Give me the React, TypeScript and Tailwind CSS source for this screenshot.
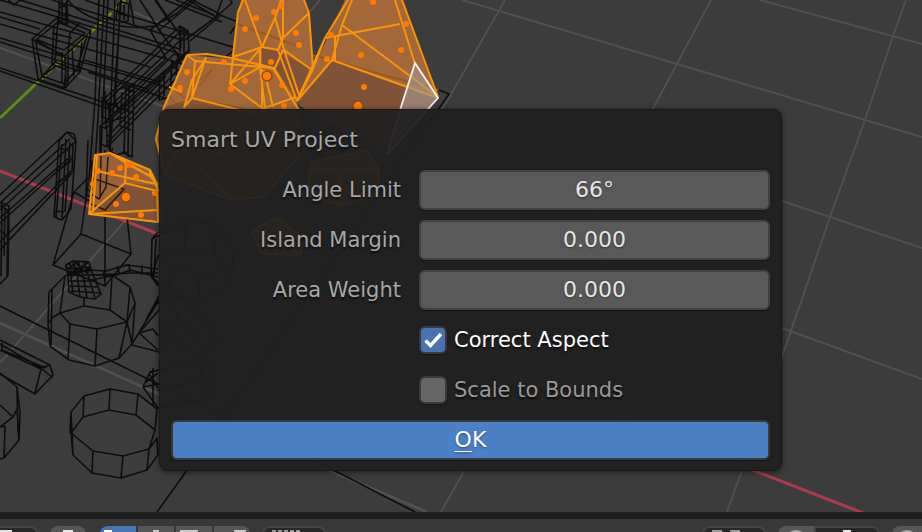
import { useState } from "react";
import type { ReactNode } from "react";

const GRID = [
  "M760 0L922 44",
  "M462 0L560 29L677 64L865 120L922 137",
  "M600 140L782 201L830 217L922 248",
  "M600 262L782 328L922 379",
  "M711 0L654 107L463 473L441 512",
  "M906 0L893 36L865 120L830 217L791 331L741 473L727 512",
  "M505 0L449 98L400 170",
  "M320 0L123 223L0 363",
  "M0 48L165 107",
  "M134 12L180 32",
];

const WIRES = [
  // Ground outline
  "M439 90L449 94L293 318L185 473L157 512 M0 306L158 384L345 476L415 512",
  // Deck planks
  "M0 0L150 44L240 74 M0 12L160 57L250 86 M0 24L150 67 M0 38L160 85L185 94 M0 42L150 90 M0 68L118 107 M0 71L112 110 M0 17L40 29 M20 0L140 37L180 49 M52 0L185 41 M85 0L130 16L236 48 M165 0L222 22 M88 72L165 98 M84 60L160 82",
  "M8 0L14 5L20 0 M155 0L170 22 M176 0L214 15",
  // Posts
  "M99 0L95 100L89 180 M104 0L98 118L94 179 M108 0L101 150L100 181 M115 0L109 150 M121 0L114 100L110 151 M120 5L116 90",
  // Curved rails
  "M68 0Q78 14 105 22Q128 30 154 26L176 14L192 0 M130 0L134 25 M140 0L166 40L180 57 M156 0L180 35 M150 30L167 60",
  "M150 30L188 0 M158 31L196 0 M188 0L216 17L232 3L230 0 M192 0L220 14 M216 17L185 40 M220 16L190 41 M216 17L222 0 M196 83L236 48 M200 86L232 56 M220 15L238 22L230 34",
  // Small box on the axis
  "M122 2L129 4L128 21L122 22L116 20L118 4Z M124 5L124 20 M118 13L128 16 M101 18L116 20",
  // Bucket
  "M32 39L58 17L91 31L65 56Z M36 40L58 22L85 33L64 50Z M32 39L38 79L65 88L80 72L91 31 M36 43L42 76L64 84L77 69L87 36 M58 17L55 62L40 79 M55 62L81 72 M54 25L52 64L66 70L64 87 M65 56L66 88 M62 52L62 83 M68 55L68 86 M72 48L74 76 M82 42L79 70 M40 79L53 64 M44 75L56 66 M34 41L64 56 M64 56L89 33 M80 23L70 33L68 53 M38 40L55 47 M52 33L72 38",
  "M59 0L59 25 M62 0L62 23 M66 2L66 26 M67 0L68 24 M59 4L68 8 M59 14L68 17 M60 8L66 4 M58 20L68 25",
  // Long railing
  "M102 101L180 26L188 31L189 52L110 120L102 117Z M105 103L183 29 M107 109L188 33 M107 120L189 50 M102 101L109 104L109 120 M180 26L181 48 M184 28L184 53 M188 31L180 35L180 52",
  "M101 126L174 54 M105 129L184 58 M107 147L188 67 M100 144L100 126L107 129L107 147L101 144 M108 142L178 70 M123 88L134 84L132 157L122 152 M126 86L124 153 M129 85L128 157 M122 92L120 126L131 130 M115 92L123 87L134 92 M115 92L115 106L132 113 M105 123L125 117 M174 54L185 58L187 72L178 79 M178 54L176 75 M172 60L170 97L159 100L160 76 M164 72L164 96 M170 65L182 72 M166 99L187 78 M112 109L165 60 M108 136L166 76",
  "M101 97L112 111 M105 91L106 128 M110 101L111 135 M114 96L119 113",
  // Lower left railing
  "M0 195L67 132L74 134L76 141L0 210 M0 203L70 139 M0 218L71 156 M0 223L72 158 M0 242L71 171 M0 250L72 173 M59 141L67 132L76 141L71 209L62 220L54 217L59 141 M62 144L56 217 M66 139L62 218 M70 142L65 212 M73 144L72 172 M58 148L70 151 M56 172L71 161 M56 183L71 174 M55 211L64 212 M0 206L8 210L7 277L0 284 M2 204L1 276 M0 202L9 206L8 276 M0 230L6 235 M5 209L4 256",
  "M88 140L86 195L101 200L107 190L112 154 M92 160L91 190 M96 160L95 196 M100 155L99 200 M105 150L103 190 M86 188L92 193 M110 151L116 155L127 152 M100 143L100 156L108 157L113 148",
  // Pedestal
  "M89 177L124 189L105 210L74 192Z M89 177L81 234L53 265L105 286L131 254L124 189 M81 234L131 254 M105 210L105 286 M74 192L53 265",
  // Spout and handle
  "M66 265L73 261L89 262L92 272L101 294L95 299L80 297L69 292L68 276Z M66 269L91 267 M67 275L94 275 M69 281L97 281 M69 286L99 287 M71 291L101 293 M73 261L77 274L80 297 M78 261L83 275L87 298 M84 262L88 275L95 298 M70 263L71 276L73 294 M66 270L79 261 M67 275L88 263 M72 276L90 268 M65 267L90 272 M67 272L92 270 M75 262L86 273 M69 264L80 275",
  "M88 270L106 271L127 265L158 269 M91 275L116 274L130 273L158 273 M91 280L117 275L130 270L158 277 M117 266L120 275 M129 264L130 274 M142 265L142 275 M151 267L152 277 M103 270L105 280",
  // Upper round vat
  "M49 292L65 276L79 271 M103 276L112 275L130 287L135 303L132 344L119 358L95 366L69 360L50 346L48 324L52 318L60 313L84 306L110 310L127 322L97 329L70 324L60 313 M49 292L48 325 M65 276L60 313 M84 297L84 306 M112 275L110 310 M130 287L127 322 M135 303L127 322L119 358 M97 329L95 366 M70 324L68 360 M52 290L51 345 M130 287L127 322L132 344",
  // Lower round vat
  "M84 396L110 389L138 394L157 409L155 430L136 415L109 410L83 417L71 433L73 455L92 473L121 478L147 470L158 455L157 438L149 449L123 456L93 451L71 433 M84 396L83 417 M110 389L109 410 M138 394L136 415 M71 412L70 433 M84 396L71 412L73 455 M93 451L92 473 M123 456L121 478 M149 449L147 470 M155 430L149 449",
  // Left edge vat and beam
  "M0 373L17 387L20 412L19 440L4 458L0 459 M0 405L13 417L17 409L19 440 M17 387L18 433 M0 427L13 417 M5 426L4 458 M0 427L5 426",
  "M0 340L50 365L53 375L35 394L0 374 M0 344L41 368L50 365 M0 350L41 369L35 393 M41 368L53 378 M2 343L2 350L46 368",
  // Tripod and beam beside the dialog
  "M159 300L132 344 M159 310L139 333L153 329L158 336 M132 345L159 352 M139 333L158 350 M158 232L152 239L151 276L158 286 M156 239L154 275 M159 296L146 320 M143 387L150 372L159 370 M143 387L159 384 M143 387L158 408 M149 374L158 388 M146 382L158 373 M153 368L153 405",
  // Vat and props behind the dialog
  "M152 239L185 221L213 224L232 245L233 265L224 290L199 301L168 295L152 276L158 256L185 248L215 254L231 270L200 274L171 268L158 256 M185 221L185 248 M213 224L215 254 M200 274L199 301 M171 268L168 295",
  "M157 304L177 291L220 338L196 357L160 325 M165 300L205 348 M170 296L178 320L160 350 M150 372L205 360L214 375L212 398L158 408 M158 390L211 379 M205 360L200 376L212 398",
];

const ORANGE_FACES = [
  ["M241 0L231 60L230 82L262 68L297 101L313 69L309 12L304 0Z", "#a66a3a"],
  ["M262 47L278 50L313 71L297 101L262 66Z", "#835439"],
  ["M345 0L313 69L297 101L332 60L438 98L402 0Z", "#a66a3a"],
  ["M332 60L438 98L387 155L300 106L297 101Z", "#835439"],
  ["M187 55L231 59L275 68L297 101L302 130L300 155L264 197L231 200L165 175L156 139L164 107Z", "#a66a3a"],
  ["M192 98L264 112L300 155L264 197L231 200L165 175L156 139L164 107Z", "#8a5736"],
  ["M95 155L110 153L150 170L158 186L165 222L89 214Z", "#9d6438"],
  ["M125 183L158 186L165 222L89 214Z", "#835439"],
  ["M311 162L367 150L379 170L378 195L341 206L307 195Z", "#a66a3a"],
  ["M251 232L277 217L300 235L301 255L262 254Z", "#a66a3a"],
];

const ORANGE_EDGES = [
  // Tall crystal
  "M243 0L238 12L233 57L230 84L262 66L274 69 M245 0L262 47L233 57 M281 0L275 18L262 47L278 50L283 38L309 13 M283 0L283 38 M260 47L260 68 M275 17L284 50L312 70 M283 50L274 70 M284 50L299 95 M278 50L297 101 M309 13L304 0 M309 13L313 69L297 100 M230 84L259 50 M230 84L262 108",
  // Large cone
  "M348 0L325 38L297 101 M352 0L342 25L332 60L297 101 M313 69L325 38 M325 38L400 24 M342 25L438 97 M332 60L438 98 M395 0L415 64L438 97 M402 0L438 97 M335 37L335 60 M312 70L297 101",
  // Left crystal
  "M187 55L207 54L231 58L274 68L296 106 M187 55L195 61L274 68 M187 55L164 107L156 139L165 175L231 200L264 197L300 155 M195 61L192 98L184 107 M206 58L192 80L184 108 M169 87L182 92 M192 98L264 116 M260 68L265 108 M264 70L273 107 M274 70L299 110 M296 97L262 109 M262 69L262 109 M192 98L206 57 M165 175L180 145L231 200",
  // Small crystal
  "M95 155L110 153L150 170L157 184L158 222L89 214Z M97 171L156 184 M110 153L126 163L125 183L89 214 M126 163L150 176L150 170 M110 153L150 176L157 184 M89 214L158 210 M125 183L157 191 M97 156L93 212 M150 170L158 191",
  "M311 162L367 150L379 170L378 195L341 206L307 195Z M311 168L341 170L379 170 M341 170L341 206",
  "M251 232L277 217L300 235L301 255L262 254Z M277 217L280 240L301 255",
];

const DOTS = [
  [281, 6], [274, 12], [256, 18], [245, 29], [296, 33], [299, 45], [271, 62], [245, 81], [231, 89],
  [224, 62], [187, 72], [180, 88], [282, 85], [284, 106], [373, 2], [406, 24], [331, 35], [327, 59],
  [361, 55], [401, 50], [364, 87], [93, 184], [98, 171], [112, 173], [120, 168], [127, 165], [132, 165],
  [136, 177], [116, 204], [141, 215], [155, 193], [235, 125], [191, 175], [289, 153], [170, 128],
];

const BIG_DOTS = [[267, 76], [358, 106], [126, 197], [221, 152]];

function Scene() {
  return (
    <svg
      aria-hidden="true"
      className="absolute inset-0 h-full w-full"
      viewBox="0 0 922 512"
      preserveAspectRatio="xMinYMin slice"
      fill="none"
    >
      <g stroke="#505050" strokeWidth="2">
        {GRID.map((d) => <path key={d} d={d} />)}
      </g>
      <path d="M0 323L143 387L333 472L427 512" stroke="#505050" strokeWidth="3" />
      <path d="M0 171L158 234L755 471L863 513" stroke="#ad3a4c" strokeWidth="3" />
      <path d="M0 118L40 80" stroke="#618a17" strokeWidth="3" />
      <path d="M40 80L125 0" stroke="#618a17" strokeWidth="3" strokeDasharray="8 2" />
      <g stroke="#0d0d0d" strokeWidth="1.6" strokeLinejoin="round">
        {WIRES.map((d) => <path key={d} d={d} />)}
      </g>
      <g opacity="0.97">
        {ORANGE_FACES.map(([d, fill]) => <path key={d} d={d} fill={fill} />)}
      </g>
      <path d="M237 24L298 46 M312 55L438 90" stroke="#975a22" strokeWidth="2" />
      <path
        d="M88 186L89 177L124 189L105 210L91 204 M95 158L92 190 M108 157L106 187L99 199L91 194 M101 156L100 198"
        stroke="#2a1a10"
        strokeWidth="1.5"
      />
      <path d="M196 83L212 70L200 86Z M168 95L178 106 M172 88L184 98" stroke="#895428" strokeWidth="1" />
      <g stroke="#f99408" strokeWidth="2" strokeLinejoin="round">
        {ORANGE_EDGES.map((d) => <path key={d} d={d} />)}
      </g>
      <path d="M415 63L438 98L387 155L401 107Z" fill="#a4968e" fillOpacity="0.65" stroke="#f2f2f2" strokeWidth="1.8" />
      <path d="M415 72L431 93" stroke="#b98a5c" strokeWidth="1" strokeDasharray="1 1" />
      <g fill="#ff7b00">
        {DOTS.map(([x, y]) => <circle key={`${x}-${y}`} cx={x} cy={y} r="3" />)}
      </g>
      <g fill="#ff7b00" stroke="#8c4a24" strokeWidth="1.5">
        {BIG_DOTS.map(([x, y]) => <circle key={`${x}-${y}`} cx={x} cy={y} r="5" />)}
      </g>
    </svg>
  );
}

function NumberRow({ id, label, initial }: { id: string; label: string; initial: string }) {
  const [value, setValue] = useState(initial);
  return (
    <div className="flex h-10 items-center gap-[18px]">
      <label htmlFor={id} className="flex-1 text-right text-[21px] text-[#a6a6a6]">{label}</label>
      <input
        id={id}
        value={value}
        onChange={(e) => setValue(e.target.value)}
        className="h-10 w-[351px] rounded-md border-2 border-[#424242] bg-[#595959] pb-0.5 text-center text-[#e6e6e6] shadow-[0_1px_1px_#171717] outline-none [text-shadow:0_1px_2px_#0006]"
      />
    </div>
  );
}

function CheckRow({ label, initial }: { label: string; initial: boolean }) {
  const [checked, setChecked] = useState(initial);
  return (
    <label className={`ml-[248px] flex h-10 items-center gap-[7px] text-[21px] ${checked ? "text-white" : "text-[#999999]"}`}>
      <span className="relative flex size-7">
        <input
          type="checkbox"
          checked={checked}
          onChange={(e) => setChecked(e.target.checked)}
          className="size-7 appearance-none rounded-md border-2 border-[#3a3a3a] bg-[#666666] shadow-[0_1px_1px_#171717] checked:bg-[#4772b3]"
        />
        {checked && (
          <svg className="pointer-events-none absolute inset-0" viewBox="0 0 28 28" fill="none" aria-hidden="true">
            <path d="M6.5 14.5L11.5 19.5L22 8" stroke="white" strokeWidth="3.4" />
          </svg>
        )}
      </span>
      {label}
    </label>
  );
}

function Dialog() {
  return (
    <form
      onSubmit={(e) => e.preventDefault()}
      className="absolute top-[109px] left-[159px] flex w-[623px] flex-col gap-2.5 rounded-lg border border-[#191919] bg-[#202020]/95 px-[11px] py-2.5 shadow-[0_1px_6px_#0008] [text-shadow:0_2px_2px_#0009]"
    >
      <h1 className="flex h-10 items-center text-[#a6a6a6]">Smart UV Project</h1>
      <NumberRow id="angle" label="Angle Limit" initial="66°" />
      <NumberRow id="margin" label="Island Margin" initial="0.000" />
      <NumberRow id="weight" label="Area Weight" initial="0.000" />
      <CheckRow label="Correct Aspect" initial={true} />
      <CheckRow label="Scale to Bounds" initial={false} />
      <button
        type="submit"
        className="h-10 rounded-md border-2 border-[#393939] bg-[#4b7fc6] text-white shadow-[0_1px_1px_#171717] [text-shadow:0_1px_2px_#0006]"
      >
        <span className="underline decoration-1 underline-offset-4">O</span>K
      </button>
    </form>
  );
}

function Tool({ label, className, children }: { label: string; className: string; children?: ReactNode }) {
  return (
    <button type="button" aria-label={label} className={`flex h-9 shrink-0 justify-center pt-1 ${className}`}>
      {children}
    </button>
  );
}

function Glyph({ className }: { className: string }) {
  return <span className={`h-6 ${className}`} />;
}

function Toolbar() {
  return (
    <footer className="h-5 shrink-0 overflow-hidden border-t-[7px] border-[#1e1e1e] bg-[#383838]">
      <div className="flex h-[50px] justify-between pt-[7px]">
        <div className="flex">
          <Tool label="Editor type" className="mr-3 w-[38px] rounded-r-lg border-2 border-l-0 border-[#444444] bg-[#282828] !justify-start !pt-0.5">
            <Glyph className="w-3 bg-[#e0e0e0]" />
          </Tool>
          <Tool label="Mode" className="mr-3.5 w-9 rounded-lg bg-[#565656]">
            <Glyph className="w-2.5 bg-[#e6e6e6]" />
          </Tool>
          <div className="mr-3 flex gap-0.5">
            <Tool label="Select" className="w-9 rounded-l-lg bg-[#4674b5] !justify-start pl-1">
              <Glyph className="w-2 bg-white" />
            </Tool>
            <Tool label="Extend" className="w-9 bg-[#565656]">
              <Glyph className="w-1.5 bg-[#c8c8c8]" />
            </Tool>
            <Tool label="Subtract" className="w-9 bg-[#565656] !justify-start pl-1">
              <Glyph className="w-[18px] bg-[#c8c8c8]" />
            </Tool>
            <Tool label="Intersect" className="w-9 rounded-r-lg bg-[#565656] !justify-end pr-1">
              <Glyph className="w-3 bg-[#c8c8c8]" />
            </Tool>
          </div>
          <Tool label="Options" className="w-16 gap-0.5 rounded-lg border-2 border-[#444444] bg-[#282828] !justify-start !pt-0.5 pl-2">
            <Glyph className="w-1 bg-[#999999]" />
            <Glyph className="w-1 bg-[#999999]" />
            <Glyph className="w-1 bg-[#999999]" />
            <Glyph className="w-1 bg-[#999999]" />
            <Glyph className="w-1 bg-[#999999]" />
          </Tool>
        </div>
        <div className="flex">
          <Tool label="Visibility" className="mr-3 w-16 gap-2 rounded-lg border-2 border-[#444444] bg-[#282828] !justify-start !pt-0.5 pl-2">
            <Glyph className="w-2.5 bg-[#999999]" />
            <Glyph className="w-2.5 bg-[#999999]" />
          </Tool>
          <Tool label="Snapping" className="w-9 rounded-l-lg bg-[#565656]">
            <Glyph className="w-5 rounded-full bg-[#a8a8a8]" />
          </Tool>
          <Tool label="Snap target" className="mr-3 w-[66px] rounded-r-lg border-2 border-[#444444] bg-[#282828] !pt-0.5">
            <Glyph className="w-2 bg-[#e6e6e6]" />
          </Tool>
          <Tool label="Proportional editing" className="w-[30px] rounded-l-lg bg-[#565656]">
            <Glyph className="w-5 rounded-full bg-[#a8a8a8]" />
          </Tool>
        </div>
      </div>
    </footer>
  );
}

export default function App() {
  return (
    <div className="flex h-screen flex-col overflow-hidden bg-[#3c3c3c] font-['DejaVu_Sans',sans-serif] text-[22px] leading-7">
      <main className="relative min-h-0 flex-1 overflow-hidden">
        <Scene />
        <Dialog />
      </main>
      <Toolbar />
    </div>
  );
}
